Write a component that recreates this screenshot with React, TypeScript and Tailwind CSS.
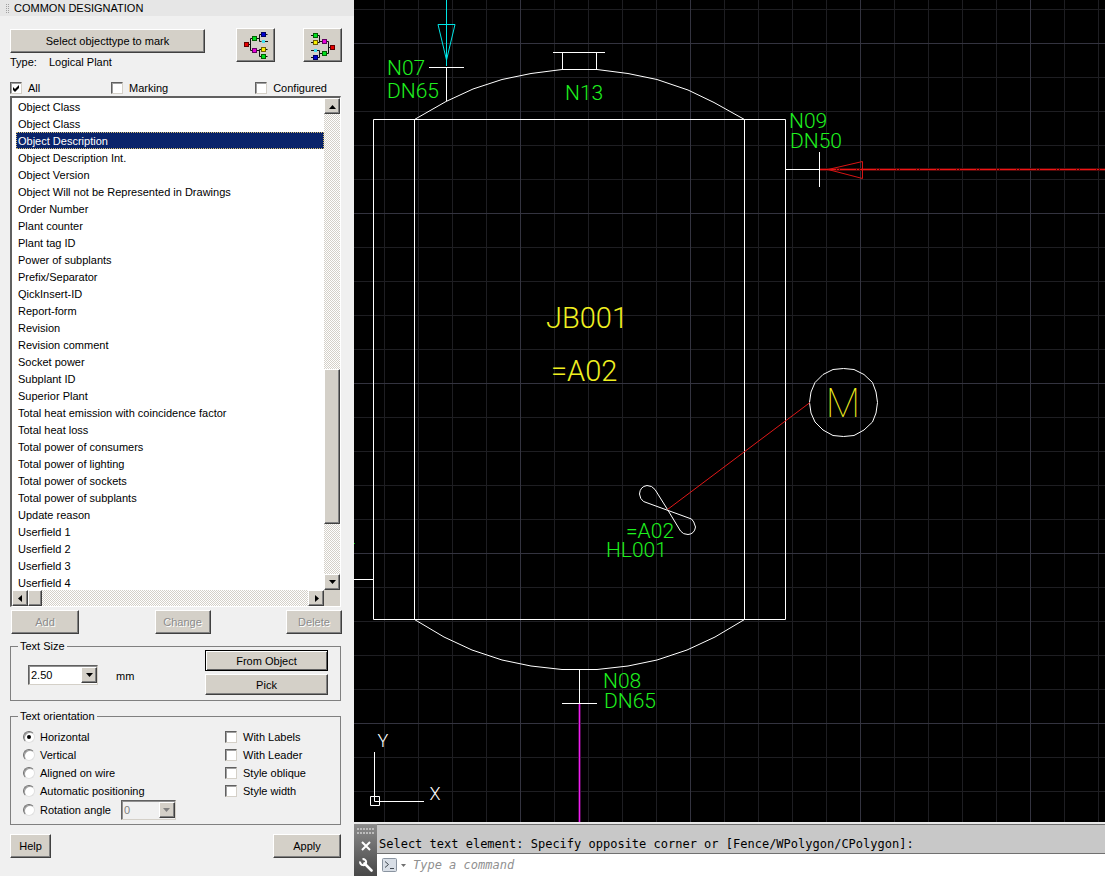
import { useState } from "react";
import type { ReactNode } from "react";

const properties = [
  "Object Class",
  "Object Class",
  "Object Description",
  "Object Description Int.",
  "Object Version",
  "Object Will not be Represented in Drawings",
  "Order Number",
  "Plant counter",
  "Plant tag ID",
  "Power of subplants",
  "Prefix/Separator",
  "QickInsert-ID",
  "Report-form",
  "Revision",
  "Revision comment",
  "Socket power",
  "Subplant ID",
  "Superior Plant",
  "Total heat emission with coincidence factor",
  "Total heat loss",
  "Total power of consumers",
  "Total power of lighting",
  "Total power of sockets",
  "Total power of subplants",
  "Update reason",
  "Userfield 1",
  "Userfield 2",
  "Userfield 3",
  "Userfield 4",
];

const raised =
  "border border-t-white border-l-white border-r-[#404040] border-b-[#404040] bg-[#d4d0c8] shadow-[inset_-1px_-1px_0_#808080]";
const dither =
  "bg-[repeating-conic-gradient(#ffffff_0_25%,#d4d0c8_0_50%)] bg-[length:2px_2px]";

function PushButton({
  children,
  className = "",
  disabled = false,
  focused = false,
}: {
  children: ReactNode;
  className?: string;
  disabled?: boolean;
  focused?: boolean;
}) {
  const edge = focused
    ? "border border-black bg-[#d4d0c8] shadow-[inset_1px_1px_0_#fff,inset_-1px_-1px_0_#606060]"
    : raised;
  const ink = disabled ? "text-[#8c8c8c] [text-shadow:1px_1px_0_#fff]" : "text-black";
  return (
    <button type="button" disabled={disabled} className={`flex items-center justify-center ${edge} ${ink} ${className}`}>
      {children}
    </button>
  );
}

function Triangle({ dir, color = "#000" }: { dir: "up" | "down" | "left" | "right"; color?: string }) {
  const d = {
    up: "M0 6h7L3.5 2z",
    down: "M0 1h7L3.5 5z",
    left: "M5 0v7L1 3.5z",
    right: "M2 0v7l4-3.5z",
  }[dir];
  return (
    <svg width="7" height="7" aria-hidden="true">
      <path d={d} fill={color} />
    </svg>
  );
}

function ScrollButton({ dir, label }: { dir: "up" | "down" | "left" | "right"; label: string }) {
  return (
    <button type="button" aria-label={label} className={`flex size-4 shrink-0 items-center justify-center ${raised}`}>
      <Triangle dir={dir} />
    </button>
  );
}

function Check({ label, checked = false, className = "" }: { label: string; checked?: boolean; className?: string }) {
  const [on, setOn] = useState(checked);
  return (
    <label className={`flex items-center gap-1.5 ${className}`}>
      <span className="grid size-3">
        <input
          type="checkbox"
          checked={on}
          onChange={() => setOn(!on)}
          className="col-start-1 row-start-1 size-3 appearance-none border border-t-[#606060] border-r-[#d4d0c8] border-b-[#d4d0c8] border-l-[#606060] bg-white shadow-[inset_1px_1px_0_#a0a0a0]"
        />
        {on && (
          <svg className="pointer-events-none col-start-1 row-start-1" width="12" height="12" aria-hidden="true">
            <path d="M3 5v3l2 2 4-4V3L5 7z" fill="#000" />
          </svg>
        )}
      </span>
      {label}
    </label>
  );
}

function Radio({ label, checked, onSelect }: { label: string; checked: boolean; onSelect: () => void }) {
  return (
    <label className="flex items-center gap-[5px]">
      <span className="grid size-3">
        <input
          type="radio"
          name="orientation"
          checked={checked}
          onChange={onSelect}
          className="col-start-1 row-start-1 size-3 appearance-none rounded-full border border-t-[#707070] border-r-[#e0e0e0] border-b-[#e0e0e0] border-l-[#707070] bg-white shadow-[inset_1px_1px_0_#a0a0a0]"
        />
        {checked && (
          <svg className="pointer-events-none col-start-1 row-start-1" width="12" height="12" aria-hidden="true">
            <circle cx="6" cy="6" r="2" fill="#000" />
          </svg>
        )}
      </span>
      {label}
    </label>
  );
}

function Combo({ value, label, className, disabled = false }: { value: string; label: string; className: string; disabled?: boolean }) {
  return (
    <div
      className={`grid h-5 border border-t-[#606060] border-r-[#d4d0c8] border-b-[#d4d0c8] border-l-[#606060] shadow-[inset_1px_1px_0_#909090] ${disabled ? "bg-[#f0f0f0] text-[#808080]" : "bg-white text-black"} ${className}`}
    >
      <select
        aria-label={label}
        disabled={disabled}
        defaultValue={value}
        className="col-start-1 row-start-1 appearance-none bg-transparent pl-0.5 opacity-100 outline-none"
      >
        <option>{value}</option>
      </select>
      <span
        className={`pointer-events-none col-start-1 row-start-1 my-px flex w-4 items-center justify-center justify-self-end ${raised}`}
      >
        <Triangle dir="down" color={disabled ? "#808080" : "#000"} />
      </span>
    </div>
  );
}

const nodeColors = {
  red: ["#e80000", "#600000"],
  green: ["#00e020", "#006000"],
  blue: ["#0000d0", "#000060"],
  cyan: ["#40e0f0", "#40e0f0"],
  yellow: ["#f8f000", "#706000"],
  magenta: ["#e800d8", "#600060"],
};

function Node({ x, y, color }: { x: number; y: number; color: keyof typeof nodeColors }) {
  const [fill, edge] = nodeColors[color];
  return color === "cyan" ? (
    <rect x={x + 1} y={y + 1} width="3" height="3" fill={fill} />
  ) : (
    <rect x={x + 0.5} y={y + 0.5} width="4" height="4" fill={fill} stroke={edge} />
  );
}

function TreeRightIcon() {
  return (
    <svg width="37" height="32" aria-hidden="true">
      <path
        d="M12 15.5h2M13.500 9.500v12M13.500 9.500h2M13.500 21.500h2M20 9.500h2.500M22.500 5.500v7M22.500 5.500h8M22.500 12.500h2M28 12.500h3M20 21.500h2.500M22.500 20.500v7M22.500 20.500h8M22.500 27.500h8"
        fill="none"
        stroke="#101010"
      />
      <Node x={7} y={13} color="red" />
      <Node x={15} y={7} color="green" />
      <Node x={15} y={19} color="magenta" />
      <Node x={24} y={3} color="blue" />
      <Node x={24} y={10} color="cyan" />
      <Node x={24} y={18} color="yellow" />
      <Node x={24} y={25} color="green" />
    </svg>
  );
}

function TreeLeftIcon() {
  return (
    <svg width="37" height="32" aria-hidden="true">
      <path
        d="M7 6.500h8.500v7M7 13.500h8.500M15.500 12.500h3M23 12.500h1.500v12M24.500 18.500h2M23 24.500h1.500M7 21.500h3M13 21.500h2.500v7M7 28.500h8.500M15.500 24.500h3"
        fill="none"
        stroke="#101010"
      />
      <Node x={9} y={4} color="green" />
      <Node x={9} y={11} color="yellow" />
      <Node x={9} y={19} color="cyan" />
      <Node x={9} y={26} color="blue" />
      <Node x={18} y={10} color="magenta" />
      <Node x={18} y={22} color="green" />
      <Node x={26} y={16} color="red" />
    </svg>
  );
}

function PropertyList() {
  const [selected, setSelected] = useState(2);
  return (
    <div className="grid grid-cols-[1fr_16px] border-t-2 border-r border-b border-l-2 border-t-[#606060] border-r-white border-b-white border-l-[#606060] bg-white">
      <ul role="listbox" aria-label="Properties" className="h-[492px] overflow-hidden pl-1">
        {properties.map((name, i) => (
          <li
            key={i}
            role="option"
            aria-selected={i === selected}
            onClick={() => setSelected(i)}
            className={
              i === selected
                ? "h-[17px] border border-dotted border-[#d8c070] bg-[#0a246a] pl-px leading-4 text-white"
                : "h-[17px] border border-transparent pl-px leading-4"
            }
          >
            {name}
          </li>
        ))}
      </ul>
      <div className={`flex flex-col ${dither}`}>
        <ScrollButton dir="up" label="Scroll up" />
        <div className="grow-[254]" />
        <div className={`h-[155px] ${raised}`} />
        <div className="grow-[50]" />
        <ScrollButton dir="down" label="Scroll down" />
      </div>
      <div className={`flex ${dither}`}>
        <ScrollButton dir="left" label="Scroll left" />
        <div className={`w-3.5 ${raised}`} />
        <div className="grow" />
        <ScrollButton dir="right" label="Scroll right" />
      </div>
      <div className="bg-[#d4d0c8]" />
    </div>
  );
}

const orientations = ["Horizontal", "Vertical", "Aligned on wire", "Automatic positioning", "Rotation angle"];

function DesignationPanel() {
  const [orientation, setOrientation] = useState("Horizontal");
  return (
    <aside className="flex w-[354px] shrink-0 flex-col bg-[#f0f0f0] font-['Liberation_Sans',Arial,sans-serif] text-[11px] leading-4 text-black">
      <header className="flex h-4 items-center gap-[5px] bg-[#e6e6e6] pl-1.5">
        <svg width="3" height="9" aria-hidden="true">
          <path d="M.5 0v9M2.500 0v9" stroke="#a0a0a0" strokeDasharray="1 1" />
        </svg>
        <h1>COMMON DESIGNATION</h1>
      </header>

      <div className="flex flex-col px-2.5 pt-3 pr-[13px]">
        <div className="flex items-start">
          <div>
            <PushButton className="mt-px h-6 w-[195px]">Select objecttype to mark</PushButton>
            <p className="mt-px flex gap-3">
              <span>Type:</span>
              <span>Logical Plant</span>
            </p>
          </div>
          <div className="-mr-px ml-auto flex gap-7">
            <button type="button" aria-label="Expand tree to the right" className={`flex h-[34px] w-[39px] items-center justify-center ${raised}`}>
              <TreeRightIcon />
            </button>
            <button type="button" aria-label="Expand tree to the left" className={`flex h-[34px] w-[39px] items-center justify-center ${raised}`}>
              <TreeLeftIcon />
            </button>
          </div>
        </div>

        <div className="mt-2.5 flex">
          <Check label="All" checked className="w-[101px]" />
          <Check label="Marking" />
          <Check label="Configured" className="mr-3.5 ml-auto" />
        </div>

        <PropertyList />

        <div className="mt-[3px] -mr-px ml-px flex justify-between">
          <PushButton disabled className="h-6 w-[68px]">Add</PushButton>
          <PushButton disabled className="h-6 w-14">Change</PushButton>
          <PushButton disabled className="h-6 w-14">Delete</PushButton>
        </div>

        <fieldset className="mt-1 flex items-start border border-[#808080] pr-3 pb-[5px] pl-[17px]">
          <legend className="-ml-2.5 px-0.5">Text Size</legend>
          <Combo value="2.50" label="Text size" className="mt-[11px] w-[70px]" />
          <span className="mt-3.5 ml-[18px]">mm</span>
          <div className="-mt-1 ml-auto flex w-[123px] flex-col gap-[3px]">
            <PushButton focused className="h-[21px]">From Object</PushButton>
            <PushButton className="h-[21px]">Pick</PushButton>
          </div>
        </fieldset>

        <fieldset className="mt-[7px] flex items-start border border-[#808080] pr-[34px] pb-1 pl-3">
          <legend className="-ml-[5px] px-0.5">Text orientation</legend>
          <div className="flex flex-col gap-0.5 pt-[5px]">
            {orientations.map((name) =>
              name === "Rotation angle" ? (
                <div key={name} className="-mt-px flex items-center gap-2.5">
                  <Radio label={name} checked={orientation === name} onSelect={() => setOrientation(name)} />
                  <Combo value="0" label="Angle" className="w-[55px]" disabled />
                </div>
              ) : (
                <Radio key={name} label={name} checked={orientation === name} onSelect={() => setOrientation(name)} />
              ),
            )}
          </div>
          <div className="ml-auto flex flex-col gap-0.5 pt-[5px]">
            <Check label="With Labels" />
            <Check label="With Leader" />
            <Check label="Style oblique" />
            <Check label="Style width" />
          </div>
        </fieldset>

        <div className="mt-[9px] flex justify-between">
          <PushButton className="h-6 w-[41px]">Help</PushButton>
          <PushButton className="h-6 w-[68px]">Apply</PushButton>
        </div>
      </div>
    </aside>
  );
}

const cadLabels = [
  { x: 387, y: 75, text: "N07" },
  { x: 387, y: 98, text: "DN65" },
  { x: 565, y: 100, text: "N13" },
  { x: 789, y: 128, text: "N09" },
  { x: 790, y: 148, text: "DN50" },
  { x: 626, y: 538, text: "=A02" },
  { x: 606, y: 557, text: "HL001" },
  { x: 603, y: 688, text: "N08" },
  { x: 604, y: 708, text: "DN65" },
];

function Drawing() {
  return (
    <svg className="size-full" role="img" aria-label="Vessel JB001 with agitator">
      <defs>
        <pattern id="grid" x="166" y="43" width="170" height="170" patternUnits="userSpaceOnUse">
          <path
            d="M34.500 0v170M68.500 0v170M102.500 0v170M136.500 0v170M0 34.500h170M0 68.500h170M0 102.500h170M0 136.500h170"
            stroke="#1e1e22"
          />
          <path d="M.5 0v170M0 .5h170" stroke="#33333f" />
        </pattern>
      </defs>
      <rect width="100%" height="100%" fill="#000" />
      <rect width="100%" height="100%" fill="url(#grid)" />
      <g transform="translate(-354 0)" fill="none" stroke="#fff">
        <path d="M373.500 119.500h412v500h-412zM414.500 119.500v500M744.500 119.500v500M354 579.500h19" />
        <path d="M414.500 119.500L446 101.500 473 89 502 79.500 531 73.500 562 69.500H597L628 73.500 657 79.500 688 90 714 102.500 744.500 119.500" />
        <path d="M414.500 619.500L444 637 472 650 502 660 531 666 562 669.500H597L628 666 657 660 687 650 715 637 744.500 619.500" />
        <path d="M553 52.500h52M562.500 52v17M596.500 52v17" />
        <path d="M429 67.500h35M446.500 67v34M785 169.500h34M819.500 152v35M579.500 669v34M562 703.500h35" />
        <path d="M446.500 0v66M438 24.500h17L446.500 60z" stroke="#00e5e5" />
        <path d="M820 169.500h1600" stroke="#500808" strokeWidth="3" />
        <path d="M820 169.500h1600" stroke="#f01414" strokeDasharray="16 1 2 1" />
        <path d="M828 169.500L862.500 161.500v17z" stroke="#d81414" />
        <path d="M579.500 704v1600" stroke="#500850" strokeWidth="3" />
        <path d="M579.500 704v1600" stroke="#f020f0" />
        <path d="M667.500 509.500L655 489.500Q652 485.500 647 485.500 640 486.500 639.500 494 640 499 643.500 501.500L691.500 519 Q694 521 695.500 527 694.500 534 688 534.500 683 534.500 680.500 531z" />
        <path d="M877.500 402.500L876 413 872.500 422 864 430 854 435.500 843.500 436.500 833 435.500 823 430 815 422 811 413 809.500 402.500 811 392 815 382.500 823 374.500 833 369.500 843.500 368.500 854 369.500 864 374.500 872.500 382.500 876 392z" />
        <path d="M667.500 509.500L810 402.500" stroke="#e01818" />
        <path d="M374.500 752v49.500H424M370.500 796.500h9v9h-9z" />
        <path d="M354 543.500h1" stroke="#00c000" />
      </g>
      <g transform="translate(-354 0)" className="font-['Roboto',sans-serif] font-light">
        <g fill="#1ff01f" fontSize="21">
          {cadLabels.map((l) => (
            <text key={`${l.x}-${l.y}`} x={l.x} y={l.y}>
              {l.text}
            </text>
          ))}
        </g>
        <g fill="#f0f020">
          <text x="546" y="328" fontSize="29">JB001</text>
          <text x="551" y="381" fontSize="29">=A02</text>
          <text x="843" y="417" fontSize="40" textAnchor="middle" className="font-thin">M</text>
        </g>
        <g fill="#fff" fontSize="18" textAnchor="middle">
          <text x="383" y="747">Y</text>
          <text x="435" y="800">X</text>
        </g>
      </g>
    </svg>
  );
}

function CommandLine() {
  return (
    <section className="flex shrink-0 border-t-2 border-[#e8e8e8] font-['DejaVu_Sans_Mono',monospace] text-[12px]">
      <div className="flex w-[23px] flex-col items-center gap-[7px] bg-linear-to-b from-[#8c8c8c] to-[#484848] pt-1">
        <svg width="17" height="6" aria-hidden="true">
          <path d="M0 1h17M0 5h17" stroke="#bcbcbc" strokeWidth="2" strokeDasharray="2 1" />
        </svg>
        <button type="button" aria-label="Close">
          <svg width="10" height="10" aria-hidden="true">
            <path d="M1 1l8 8M9 1L1 9" stroke="#fff" strokeWidth="2" />
          </svg>
        </button>
        <button type="button" aria-label="Customize">
          <svg width="14" height="14" viewBox="0 0 14 14" aria-hidden="true">
            <path d="M5.500 5.500l7 7" stroke="#fff" strokeWidth="2.600" strokeLinecap="round" />
            <path d="M3.500 1.200A3 3 0 1 1 1.200 3.500" fill="none" stroke="#fff" strokeWidth="2" />
          </svg>
        </button>
      </div>
      <div className="flex min-w-0 grow flex-col">
        <p className="border-y border-[#707070] bg-[#c8c8c8] pt-[11px] pb-px pl-0.5 leading-4 whitespace-nowrap text-black">
          Select text element: Specify opposite corner or [Fence/WPolygon/CPolygon]:
        </p>
        <label className="flex h-[22px] items-center bg-white pl-[5px]">
          <svg width="15" height="14" aria-hidden="true">
            <rect x=".5" y=".5" width="14" height="13" rx="1" fill="#d8dee6" stroke="#8a94a0" />
            <path d="M3 3.500l3.500 3L3 9.500M8 10.500h4" fill="none" stroke="#404850" />
          </svg>
          <svg className="ml-1" width="5" height="3" aria-hidden="true">
            <path d="M0 0h5L2.500 3z" fill="#707070" />
          </svg>
          <input
            aria-label="Command"
            placeholder="Type a command"
            className="ml-[7px] min-w-0 grow italic outline-none placeholder:text-[#909090]"
          />
        </label>
      </div>
    </section>
  );
}

export default function App() {
  return (
    <div className="flex min-h-screen bg-black">
      <DesignationPanel />
      <main className="flex min-w-0 grow flex-col">
        <div className="min-h-0 grow basis-0">
          <Drawing />
        </div>
        <CommandLine />
      </main>
    </div>
  );
}
